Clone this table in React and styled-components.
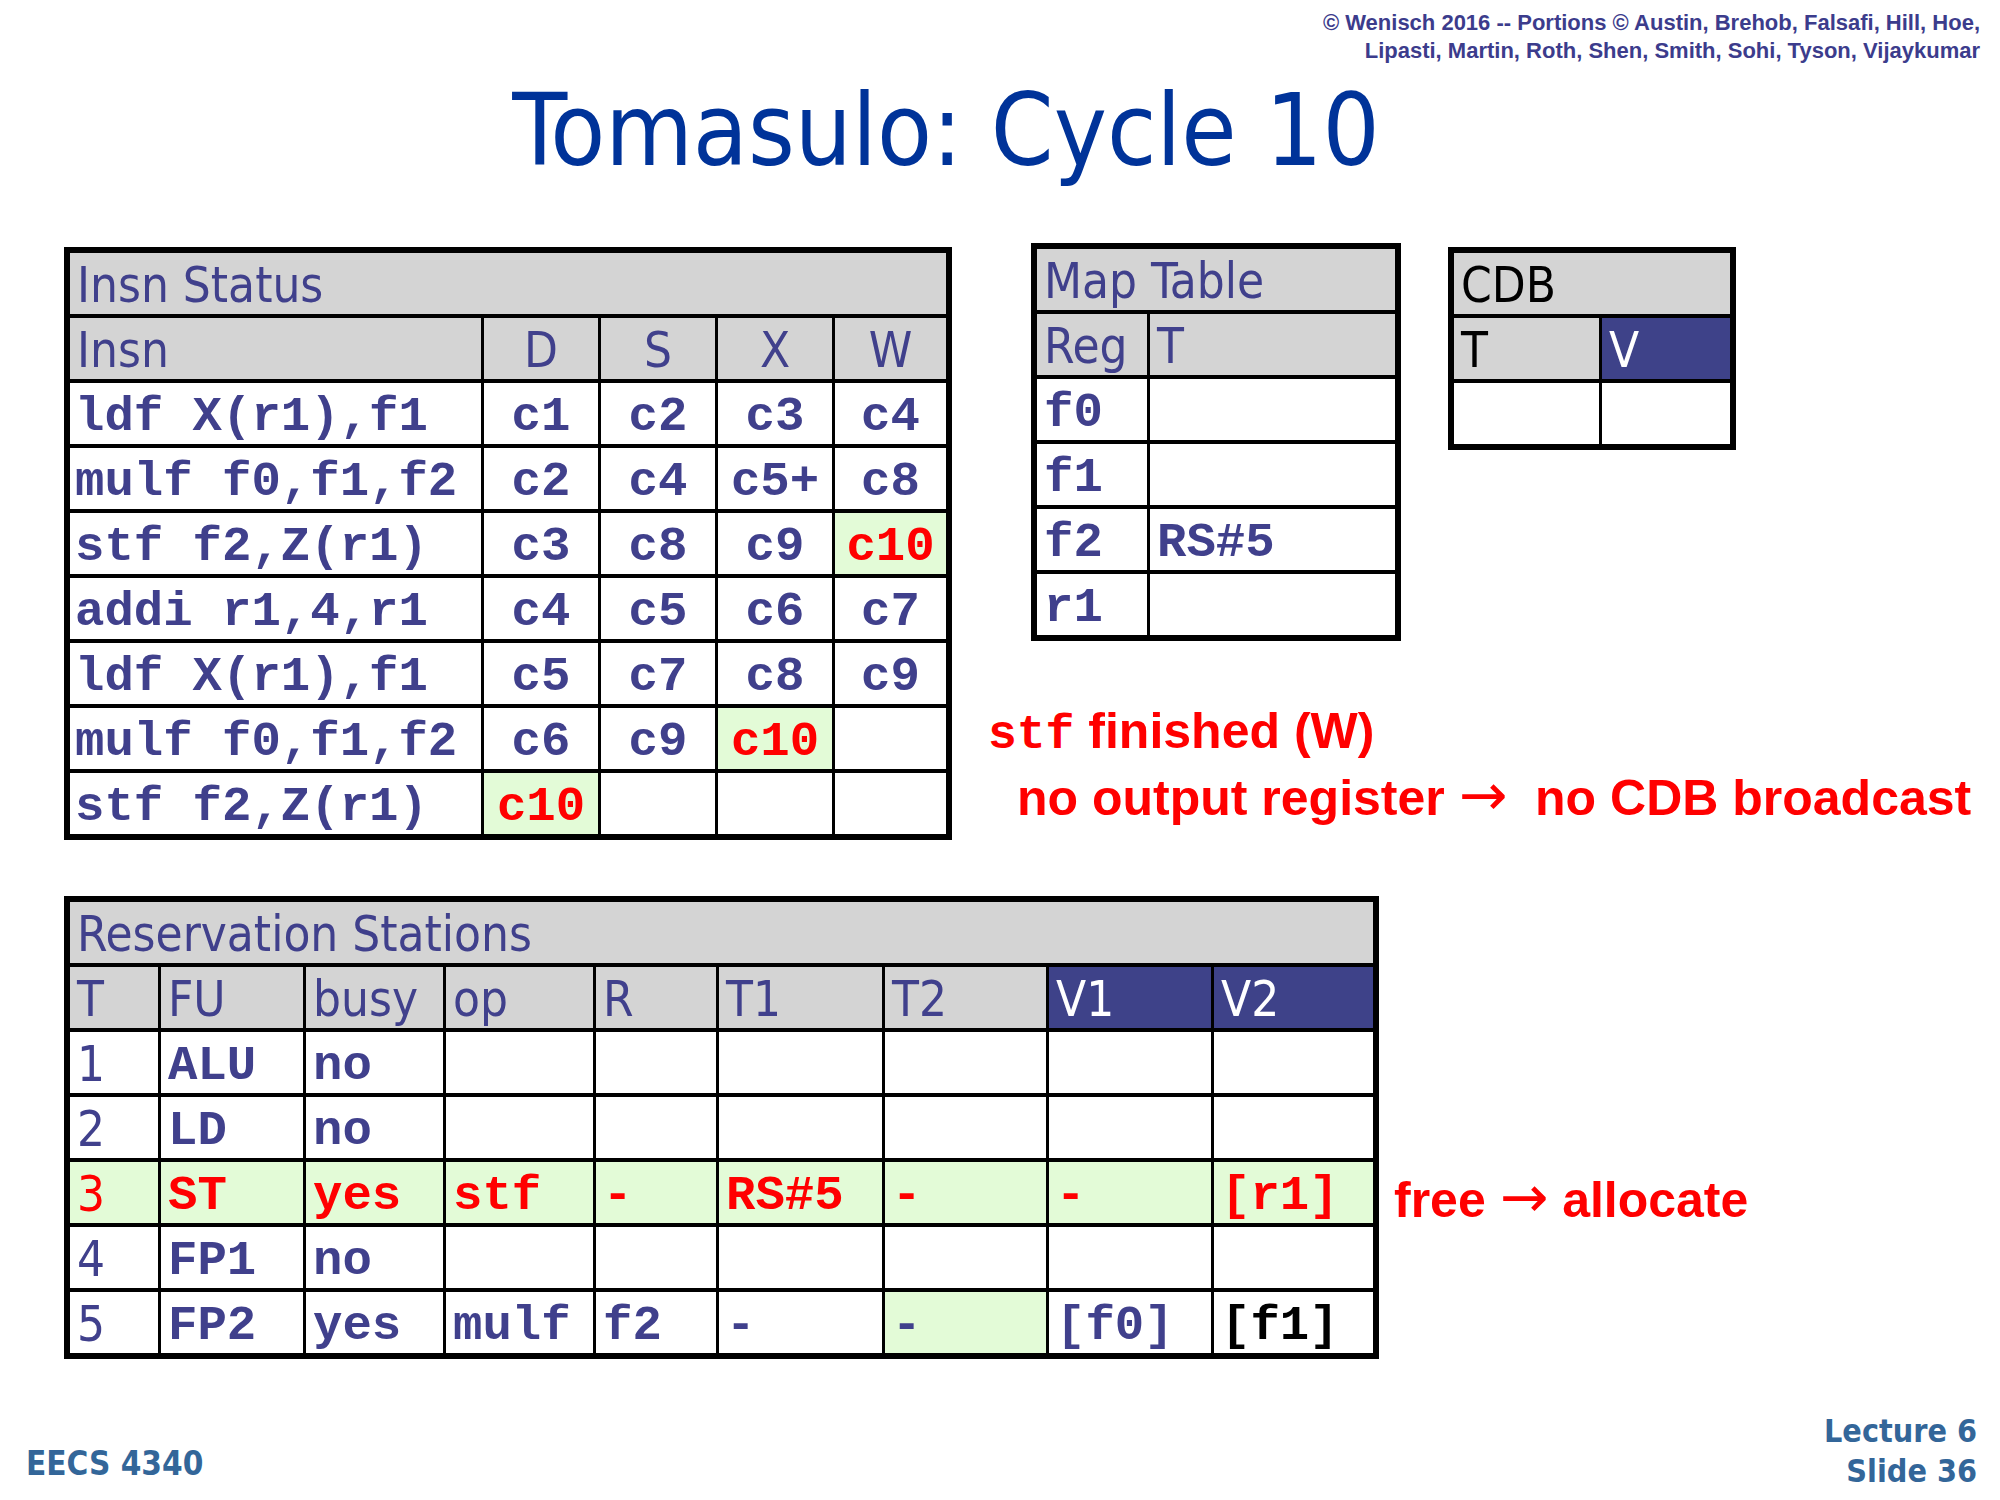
import React from 'react'
import styled, { createGlobalStyle } from 'styled-components'

const SLATE = '#40408c'
const GREY = '#d4d4d4'
const NAVY = '#3e4289'
const GREEN = '#e3fbd7'
const RED = '#ff0000'

const HEAD_FONT = `"DejaVu Sans Condensed", "Liberation Sans Narrow", "DejaVu Sans", sans-serif`
const MONO_FONT = `"Liberation Mono", "Courier New", monospace`
const SANS_FONT = `"Liberation Sans", Arial, sans-serif`
const COMIC_FONT = `"Comic Sans MS", "DejaVu Sans Condensed", "DejaVu Sans", sans-serif`

const GlobalStyle = createGlobalStyle`
  body {
    margin:0;
    background:#fff;
  }
`

const Slide = styled.div`
  width:2000px;
  height:1500px;
  display:flex;
  flex-direction:column;
  background:#fff;
  overflow:hidden;
`

const Credits = styled.div`
  align-self:flex-end;
  text-align:right;
  padding:9px 20px 0 0;
  font:bold 22px/28px ${SANS_FONT};
  color:#3c3c8c;
`

const Title = styled.h1`
  margin:11px 0 0;
  padding-right:108px;
  text-align:center;
  font-family:${COMIC_FONT};
  font-stretch:condensed;
  font-weight:normal;
  font-size:100px;
  line-height:110px;
  color:#003399;
`

const TopSection = styled.div`
  display:flex;
  align-items:flex-start;
  margin-top:57px;
`

const SideColumn = styled.div`
  display:flex;
  flex-direction:column;
  margin-left:36px;
`

const SideTables = styled.div`
  display:flex;
  align-items:flex-start;
  padding-left:43px;
`

/* tables are grids on a black ground: the gaps draw the rules */
const Grid = styled.div`
  display:grid;
  grid-template-columns:${p => p.$cols};
  grid-auto-rows:61px;
  column-gap:3px;
  row-gap:4px;
  background:#000;
  border:6px solid #000;
  width:max-content;
  margin:${p => p.$margin || '0'};
`

const Cell = styled.div`
  display:flex;
  align-items:center;
  justify-content:${p => (p.$center ? 'center' : 'flex-start')};
  padding:${p => (p.$mono ? '6px' : '4px')} ${p => (p.$center ? '0' : '7px')} 0;
  background:${p => p.$bg || '#fff'};
  color:${p => p.$color || SLATE};
  font-family:${p => (p.$mono ? MONO_FONT : HEAD_FONT)};
  font-stretch:${p => (p.$mono ? 'normal' : 'condensed')};
  font-weight:${p => (p.$mono ? 'bold' : 'normal')};
  font-size:49px;
  white-space:pre;
  overflow:hidden;
`

const TitleCell = styled(Cell)`
  grid-column:1 / -1;
  background:${GREY};
`

const Note = styled.div`
  margin-top:${p => p.$top || 0}px;
  margin-left:${p => p.$left || 0}px;
  padding-left:${p => p.$indent || 0}px;
  font:bold 50px/62px ${SANS_FONT};
  color:${RED};
  white-space:pre;
`

const Code = styled.span`
  font-family:${MONO_FONT};
  font-size:48px;
`

const Arrow = styled.span`
  font-family:"DejaVu Sans", sans-serif;
  font-weight:normal;
  font-size:58px;
  line-height:1;
`

const BottomSection = styled.div`
  display:flex;
  align-items:flex-start;
  margin-top:56px;
`

const Footer = styled.div`
  margin-top:auto;
  display:flex;
  justify-content:space-between;
  align-items:flex-end;
  padding:0 23px 9px 26px;
  font-family:${COMIC_FONT};
  font-weight:bold;
  color:#336699;
`

const Course = styled.div`
  font-size:33px;
  line-height:40px;
  margin-bottom:7px;
`

const SlideNo = styled.div`
  text-align:right;
  font-size:32px;
  line-height:40px;
`

const insnRows = [
  ['ldf X(r1),f1', 'c1', 'c2', 'c3', 'c4'],
  ['mulf f0,f1,f2', 'c2', 'c4', 'c5+', 'c8'],
  ['stf f2,Z(r1)', 'c3', 'c8', 'c9', '*c10'],
  ['addi r1,4,r1', 'c4', 'c5', 'c6', 'c7'],
  ['ldf X(r1),f1', 'c5', 'c7', 'c8', 'c9'],
  ['mulf f0,f1,f2', 'c6', 'c9', '*c10', ''],
  ['stf f2,Z(r1)', '*c10', '', '', ''],
]

const mapRows = [
  ['f0', ''],
  ['f1', ''],
  ['f2', 'RS#5'],
  ['r1', ''],
]

const rsHeads = ['T', 'FU', 'busy', 'op', 'R', 'T1', 'T2', 'V1', 'V2']

const rsRows = [
  { cells: ['1', 'ALU', 'no', '', '', '', '', '', ''] },
  { cells: ['2', 'LD', 'no', '', '', '', '', '', ''] },
  { cells: ['3', 'ST', 'yes', 'stf', '-', 'RS#5', '-', '-', '[r1]'], live: true },
  { cells: ['4', 'FP1', 'no', '', '', '', '', '', ''] },
  { cells: ['5', 'FP2', 'yes', 'mulf', 'f2', '-', '-', '[f0]', '[f1]'], greenAt: 6, blackAt: 8 },
]

const InsnStatus = () => (
  <Grid $cols="411px 114px 114px 114px 111px" $margin="4px 0 0 64px">
    <TitleCell>Insn Status</TitleCell>
    <Cell $bg={GREY}>Insn</Cell>
    {['D', 'S', 'X', 'W'].map(h => (
      <Cell key={h} $bg={GREY} $center>{h}</Cell>
    ))}
    {insnRows.map((row, i) =>
      row.map((v, j) => {
        const hot = v.startsWith('*')
        return (
          <Cell
            key={i + '-' + j}
            $mono
            $center={j > 0}
            $bg={hot ? GREEN : '#fff'}
            $color={hot ? RED : SLATE}
            style={j === 0 ? { paddingLeft: 5 } : undefined}
          >
            {hot ? v.slice(1) : v}
          </Cell>
        )
      })
    )}
  </Grid>
)

const MapTable = () => (
  <Grid $cols="110px 245px">
    <TitleCell>Map Table</TitleCell>
    <Cell $bg={GREY}>Reg</Cell>
    <Cell $bg={GREY}>T</Cell>
    {mapRows.map(([r, t]) => (
      <React.Fragment key={r}>
        <Cell $mono>{r}</Cell>
        <Cell $mono>{t}</Cell>
      </React.Fragment>
    ))}
  </Grid>
)

const CdbTable = () => (
  <Grid $cols="145px 128px" $margin="4px 0 0 47px">
    <TitleCell $color="#000">CDB</TitleCell>
    <Cell $bg={GREY} $color="#000">T</Cell>
    <Cell $bg={NAVY} $color="#fff">V</Cell>
    <Cell />
    <Cell />
  </Grid>
)

const ReservationStations = () => (
  <Grid $cols="88px 142px 137px 147px 120px 163px 161px 162px 159px" $margin="0 0 0 64px">
    <TitleCell>Reservation Stations</TitleCell>
    {rsHeads.map(h => (
      <Cell key={h} $bg={h.startsWith('V') ? NAVY : GREY} $color={h.startsWith('V') ? '#fff' : SLATE}>
        {h}
      </Cell>
    ))}
    {rsRows.map((row, i) =>
      row.cells.map((v, j) => {
        let bg = '#fff'
        let color = SLATE
        if (row.live) {
          bg = GREEN
          color = RED
        }
        if (row.greenAt === j) bg = GREEN
        if (row.blackAt === j) color = '#000'
        return (
          <Cell key={i + '-' + j} $mono={j > 0} $bg={bg} $color={color}>
            {v}
          </Cell>
        )
      })
    )}
  </Grid>
)

const App = () => {
  return (
    <>
      <GlobalStyle />
      <Slide>
        <Credits>
          © Wenisch 2016 -- Portions © Austin, Brehob, Falsafi, Hill, Hoe,
          <br />
          Lipasti, Martin, Roth, Shen, Smith, Sohi, Tyson, Vijaykumar
        </Credits>
        <Title>Tomasulo: Cycle 10</Title>
        <TopSection>
          <InsnStatus />
          <SideColumn>
            <SideTables>
              <MapTable />
              <CdbTable />
            </SideTables>
            <Note $top={59}>
              <Code>stf</Code> finished (W)
            </Note>
            <Note $indent={29}>no output register <Arrow>→</Arrow>  no CDB broadcast</Note>
          </SideColumn>
        </TopSection>
        <BottomSection>
          <ReservationStations />
          <Note $top={272} $left={15}>free <Arrow>→</Arrow> allocate</Note>
        </BottomSection>
        <Footer>
          <Course>EECS 4340</Course>
          <SlideNo>
            Lecture 6
            <br />
            Slide 36
          </SlideNo>
        </Footer>
      </Slide>
    </>
  )
}

export default App
